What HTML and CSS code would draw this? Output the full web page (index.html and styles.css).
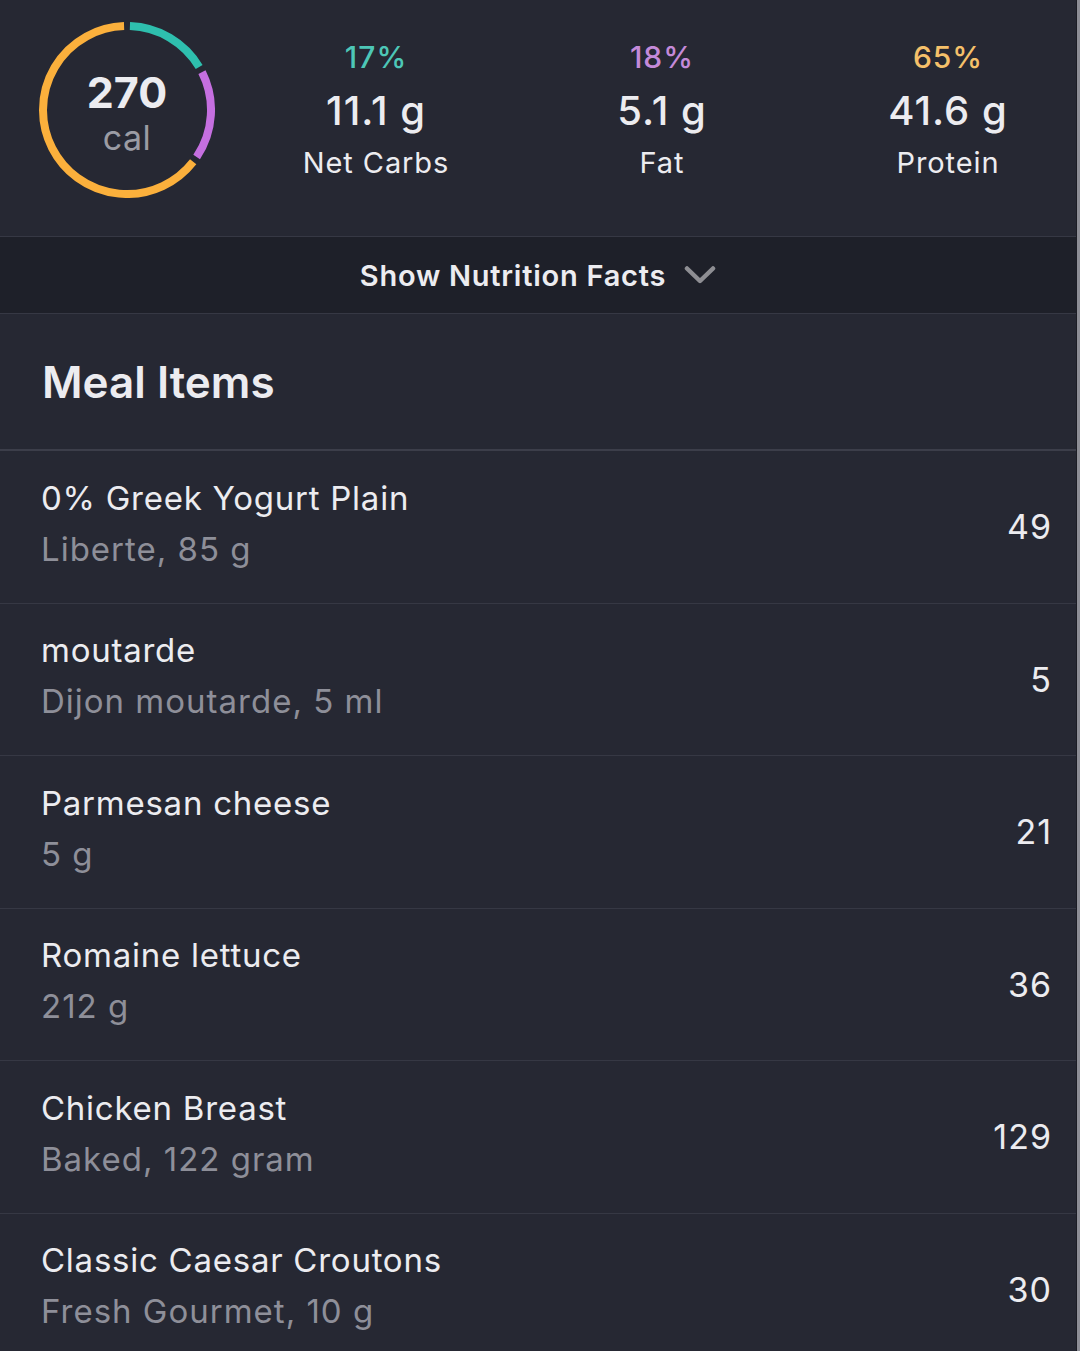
FILE: index.html
```html
<!DOCTYPE html>
<html>
<head>
<meta charset="utf-8">
<link rel="stylesheet" href="styles.css">
</head>
<body>
<div class="page">
  <section class="summary">
    <div class="ring">
      <svg class="ring-svg" width="176" height="176" viewBox="0 0 176 176">
        <path d="M90.93 4.05 A84 84 0 0 1 160.16 44.99" fill="none" stroke="#2ebfae" stroke-width="8"/>
        <path d="M162.98 50.12 A84 84 0 0 1 157.64 134.97" fill="none" stroke="#c56fe0" stroke-width="8"/>
        <path d="M154.19 139.72 A84 84 0 1 1 85.07 4.05" fill="none" stroke="#fbb03c" stroke-width="8"/>
      </svg>
      <div class="ring-text">
        <div class="cal-num">270</div>
        <div class="cal-unit">cal</div>
      </div>
    </div>
    <div class="macros">
      <div class="macro">
        <div class="pct pct-carbs">17%</div>
        <div class="amount">11.1 g</div>
        <div class="label">Net Carbs</div>
      </div>
      <div class="macro">
        <div class="pct pct-fat">18%</div>
        <div class="amount">5.1 g</div>
        <div class="label">Fat</div>
      </div>
      <div class="macro">
        <div class="pct pct-protein">65%</div>
        <div class="amount">41.6 g</div>
        <div class="label">Protein</div>
      </div>
    </div>
  </section>

  <div class="toggle">
    <span class="toggle-text">Show Nutrition Facts</span>
    <svg class="chevron" width="32" height="20" viewBox="0 0 32 20">
      <path d="M3 3.5 L16 16 L29 3.5" fill="none" stroke="#8e8e93" stroke-width="4.5" stroke-linecap="round" stroke-linejoin="round"/>
    </svg>
  </div>

  <div class="section-head">
    <h2 class="section-title">Meal Items</h2>
  </div>

  <ul class="items">
    <li class="item">
      <div class="item-info">
        <div class="item-name">0% Greek Yogurt Plain</div>
        <div class="item-desc">Liberte, 85 g</div>
      </div>
      <div class="item-cal">49</div>
    </li>
    <li class="item">
      <div class="item-info">
        <div class="item-name">moutarde</div>
        <div class="item-desc">Dijon moutarde, 5 ml</div>
      </div>
      <div class="item-cal">5</div>
    </li>
    <li class="item">
      <div class="item-info">
        <div class="item-name">Parmesan cheese</div>
        <div class="item-desc">5 g</div>
      </div>
      <div class="item-cal">21</div>
    </li>
    <li class="item">
      <div class="item-info">
        <div class="item-name">Romaine lettuce</div>
        <div class="item-desc">212 g</div>
      </div>
      <div class="item-cal">36</div>
    </li>
    <li class="item">
      <div class="item-info">
        <div class="item-name">Chicken Breast</div>
        <div class="item-desc">Baked, 122 gram</div>
      </div>
      <div class="item-cal">129</div>
    </li>
    <li class="item">
      <div class="item-info">
        <div class="item-name">Classic Caesar Croutons</div>
        <div class="item-desc">Fresh Gourmet, 10 g</div>
      </div>
      <div class="item-cal">30</div>
    </li>
  </ul>
</div>
</body>
</html>
```

FILE: styles.css
```css
html, body {
  margin: 0;
  padding: 0;
  background: #262833;
}

body {
  font-family: Inter, "Noto Sans", "Liberation Sans", sans-serif;
  color: #ececf0;
  width: 1080px;
  height: 1351px;
  overflow: hidden;
}

.page {
  width: 1076px;
  height: 1351px;
  border-right: 1px solid #1c1d25;
  box-shadow: 3px 0 0 #8d8e96;
  background: #262833;
  overflow: hidden;
}

/* summary */
.summary {
  height: 236px;
  border-bottom: 1px solid #363844;
  display: flex;
  align-items: flex-start;
}

.ring {
  position: relative;
  width: 176px;
  height: 176px;
  margin: 22px 0 0 39px;
  flex: none;
}

.ring-svg {
  display: block;
}

.ring-text {
  position: absolute;
  inset: 0;
  display: flex;
  flex-direction: column;
  align-items: center;
  padding-top: 44px;
  box-sizing: border-box;
}

.cal-num {
  font-size: 43px;
  font-weight: 700;
  line-height: 52px;
  color: #ececf0;
}

.cal-unit {
  font-size: 34px;
  line-height: 40px;
  color: #9b9ca4;
  letter-spacing: 0.5px;
}

.macros {
  display: flex;
  margin-left: 18px;
  padding-top: 37px;
}

.macro {
  width: 286px;
  flex: none;
  display: flex;
  flex-direction: column;
  align-items: center;
}

.pct {
  font-size: 30px;
  line-height: 40px;
  font-weight: 500;
  letter-spacing: 1px;
}

.pct-carbs { color: #4dc7b7; }
.pct-fat { color: #c48ad9; }
.pct-protein { color: #f5c06a; }

.amount {
  font-size: 40px;
  line-height: 68px;
  font-weight: 500;
  letter-spacing: 1px;
  color: #ececf0;
}

.label {
  font-size: 29px;
  line-height: 36px;
  letter-spacing: 0.9px;
  color: #ececf0;
}

/* toggle bar */
.toggle {
  height: 76px;
  background: #1e2029;
  border-bottom: 1px solid #363844;
  display: flex;
  align-items: center;
  justify-content: center;
  gap: 18px;
}

.toggle-text {
  font-size: 29px;
  font-weight: 600;
  letter-spacing: 0.75px;
  color: #ececf0;
}

.chevron {
  display: block;
}

/* section head */
.section-head {
  height: 135px;
  border-bottom: 2px solid #3c3e4a;
  display: flex;
  align-items: center;
  padding-left: 42px;
}

.section-title {
  margin: 0;
  font-size: 44px;
  font-weight: 600;
  color: #ececf0;
}

/* items */
.items {
  list-style: none;
  margin: 0;
  padding: 0;
}

.item {
  height: 151.5px;
  border-bottom: 1px solid #363844;
  display: flex;
  align-items: center;
  justify-content: space-between;
  padding: 0 24px 0 41px;
}

.item-info {
  display: flex;
  flex-direction: column;
  padding-bottom: 6px;
}

.item-name {
  font-size: 33px;
  line-height: 51px;
  letter-spacing: 0.75px;
  color: #ececf0;
}

.item-desc {
  font-size: 33px;
  line-height: 51px;
  letter-spacing: 1px;
  color: #8e8f99;
}

.item-cal {
  font-size: 34px;
  letter-spacing: 1px;
  color: #ececf0;
}
```
